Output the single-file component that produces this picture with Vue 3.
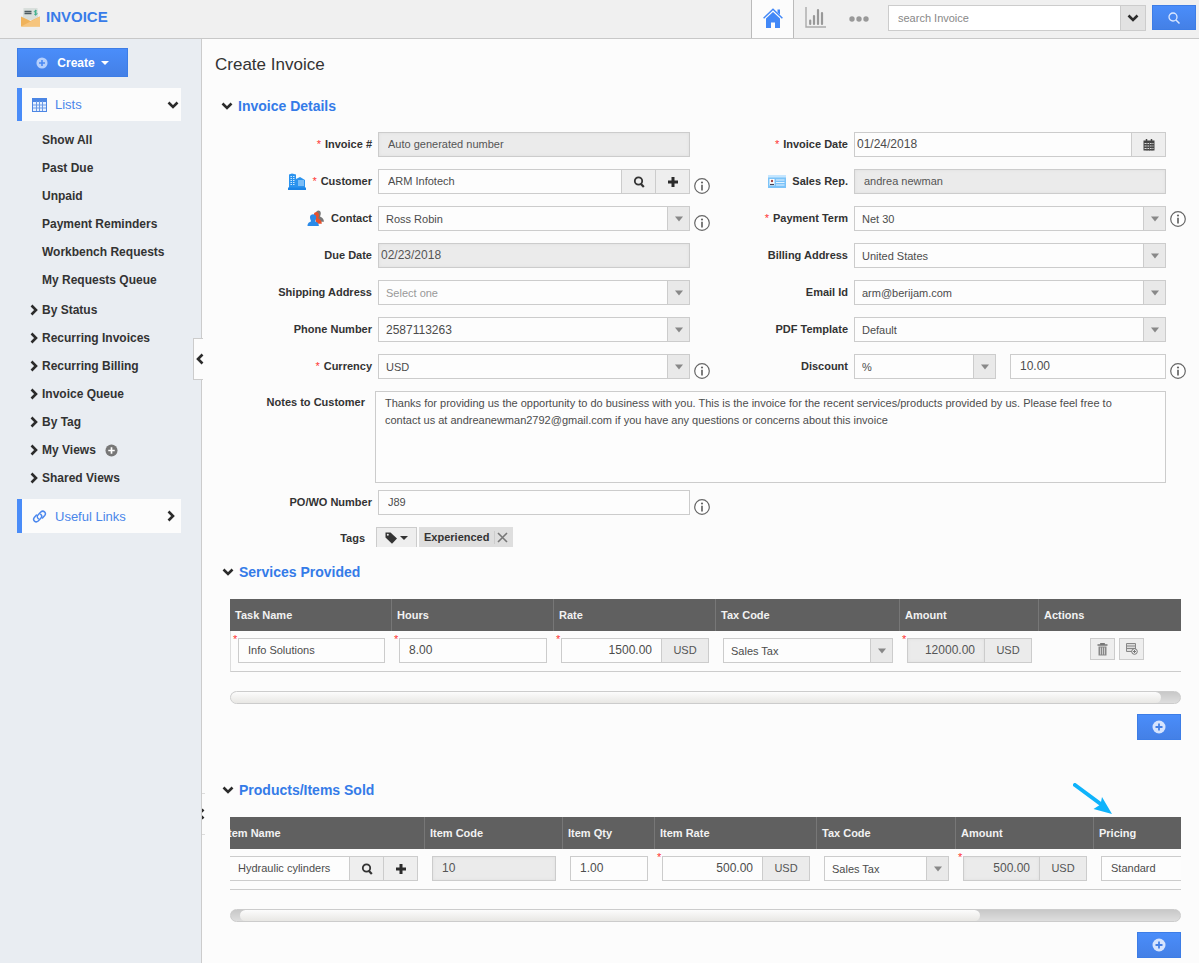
<script setup>
import { onMounted, ref } from 'vue'

const subLists = ['Show All', 'Past Due', 'Unpaid', 'Payment Reminders', 'Workbench Requests', 'My Requests Queue']
const groups = [
  { name: 'By Status' },
  { name: 'Recurring Invoices' },
  { name: 'Recurring Billing' },
  { name: 'Invoice Queue' },
  { name: 'By Tag' },
  { name: 'My Views', add: true },
  { name: 'Shared Views' },
]

const fields = [
  { id: 'number', label: 'Invoice #', required: true, type: 'text', value: 'Auto generated number', locked: true },
  { id: 'date', label: 'Invoice Date', required: true, type: 'date', value: '01/24/2018' },
  { id: 'customer', label: 'Customer', required: true, type: 'lookup', value: 'ARM Infotech', icon: 'building', info: 'low' },
  { id: 'rep', label: 'Sales Rep.', type: 'text', value: 'andrea newman', locked: true, icon: 'card' },
  { id: 'contact', label: 'Contact', type: 'select', value: 'Ross Robin', icon: 'people', info: 'low' },
  { id: 'term', label: 'Payment Term', required: true, type: 'select', value: 'Net 30', info: 'mid' },
  { id: 'due', label: 'Due Date', type: 'text', value: '02/23/2018', locked: true, tight: true, num: true },
  { id: 'billing', label: 'Billing Address', type: 'select', value: 'United States' },
  { id: 'shipping', label: 'Shipping Address', type: 'select', value: 'Select one', empty: true },
  { id: 'email', label: 'Email Id', type: 'select', value: 'arm@berijam.com' },
  { id: 'phone', label: 'Phone Number', type: 'select', value: '2587113263', num: true },
  { id: 'pdf', label: 'PDF Template', type: 'select', value: 'Default' },
  { id: 'currency', label: 'Currency', required: true, type: 'select', value: 'USD', info: 'low' },
  { id: 'discount', label: 'Discount', type: 'discount', value: '%', amount: '10.00', info: 'low' },
]

const notes = ref(
  'Thanks for providing us the opportunity to do business with you. This is the invoice for the recent services/products provided by us. Please feel free to contact us at andreanewman2792@gmail.com if you have any questions or concerns about this invoice',
)

const productScroll = ref(null)
onMounted(() => {
  productScroll.value.scrollLeft = 10
})
</script>

<template>
  <svg class="sprite" aria-hidden="true">
    <symbol id="chev" viewBox="0 0 12 12"><path d="M1.5 3.5 6 8 10.500 3.500" fill="none" stroke="#2b2b2b" stroke-width="2.600" /></symbol>
    <symbol id="plus" viewBox="0 0 12 12"><path d="M6 1v10M1 6h10" stroke="#2b2b2b" stroke-width="3" /></symbol>
    <symbol id="find" viewBox="0 0 12 12"><circle cx="5.500" cy="5" r="3.700" fill="none" stroke="#333" stroke-width="1.800" /><path d="m8 8 2.800 3" stroke="#333" stroke-width="2.200" /></symbol>
    <symbol id="tri" viewBox="0 0 8 6"><path d="M0 .5h8L4 5.500z" fill="#888" /></symbol>
    <symbol id="info" viewBox="0 0 16 16"><circle cx="8" cy="8" r="7.300" fill="#fff" stroke="#666" stroke-width="1.200" /><path d="M8 6.800v5.700" stroke="#666" stroke-width="1.700" /><circle cx="8" cy="4.500" r="1.100" fill="#666" /></symbol>
    <symbol id="pluscircle" viewBox="0 0 14 14"><circle cx="7" cy="7" r="6.500" fill="currentColor" /><path d="M7 3.500v7M3.500 7h7" stroke="var(--cross)" stroke-width="1.800" /></symbol>
    <symbol id="building" viewBox="0 0 18 17">
      <path d="M1 1.500 4 .5l4 1V15H1zM8 6l4-2 5 3v8H8z" fill="#2b93ee" />
      <path d="M0 14.500h18V17H0z" fill="#1c84e6" />
      <path d="M2.500 3.500h4M2.500 5.500h4M2.500 7.500h4M2.500 9.500h4M2.500 11.500h4M10 8h6M10 10h6M10 12h6" stroke="#c9e6ff" stroke-width="1" />
      <path d="M4.500 2v11" stroke="#2b93ee" />
    </symbol>
    <symbol id="people" viewBox="0 0 17 16">
      <path d="M8.500 2.500C9 0 12.500-.3 13 2.500c.2 2-.6 3-.6 3.500 1.500 1 3.600 2 3.600 5h-5z" fill="#777" />
      <path d="M6.500 4C7 1 11 1 11.300 4.200c.1 2-.8 3-.6 3.800 1.500 1 3.300 2 3.300 5H9z" fill="#e8502b" />
      <path d="M2.800 6.500C3 3 8.500 3 8.700 6.500c0 2-1 3.300-1 4 1.800 1 3.500 1.500 3.500 4.500H.5c0-3 1.600-3.500 3.300-4.500 0-.7-1-2-1-4z" fill="#2a8ae8" />
    </symbol>
    <symbol id="card" viewBox="0 0 18 13">
      <path d="M0 0h18v13H0z" fill="#7cc3f8" /><path d="M0 0h18v2.500H0z" fill="#c5e6ff" />
      <path d="M1.500 4h5v6.500h-5z" fill="#fff" /><circle cx="4" cy="6" r="1.200" fill="#a3423c" /><path d="M2 9.500h4" stroke="#445" stroke-width="1.200" />
      <path d="M8 5h8.500M8 7.500h8.500M8 10h8.500" stroke="#e3f3ff" stroke-width="1" />
    </symbol>
  </svg>

  <div class="page">
    <header class="topbar">
      <a class="brand" href="#">
        <svg class="brand-icon" viewBox="0 0 19 19">
          <path d="M2.500 0h14l1 12h-16z" fill="#d9dfdc" />
          <path d="M3.500 3.500h7M3.500 5.500h7" stroke="#4c5a60" stroke-width="1.400" />
          <path d="M16 3.200c-1-1-2.800-.6-2.700.5.100 1.200 2.700.6 2.700 2 0 1.200-2 1.300-2.900.3M14.600 1.800v5.800" fill="none" stroke="#3fb08c" stroke-width="1" />
          <path d="M0 8.500 9.500 13 19 8.500v10H0z" fill="#f0b35b" />
          <path d="M0 18.500 19 8.500v10z" fill="#f6c57e" />
        </svg>
        <span>INVOICE</span>
      </a>
      <nav class="tabs">
        <a class="tab active" href="#" aria-label="Home">
          <svg width="20" height="20" viewBox="0 0 20 20"><path d="M3 10.500 10 4l7 6.500V20h-5v-5.500H8V20H3z" fill="#4288f7" /><path d="m.6 10.200 9.400-9 9.400 9" fill="none" stroke="#4288f7" stroke-width="1.500" /><path d="M14.500 1.500H17v5.300l-2.500-2.300z" fill="#4288f7" /></svg>
        </a>
        <a class="tab" href="#" aria-label="Reports">
          <svg width="21" height="21" viewBox="0 0 21 21"><path d="M1 0v20h20" fill="none" stroke="#aaa" stroke-width="1.400" /><path d="M5.200 17v-3.500M9 17V9M13 17V3M17 17V6" stroke="#999" stroke-width="2.200" stroke-linecap="round" /></svg>
        </a>
        <a class="tab" href="#" aria-label="More">
          <svg width="20" height="6" viewBox="0 0 20 6"><g fill="#999"><circle cx="3" cy="3" r="2.700" /><circle cx="10" cy="3" r="2.700" /><circle cx="17" cy="3" r="2.700" /></g></svg>
        </a>
      </nav>
      <form class="search" @submit.prevent>
        <input type="text" placeholder="search Invoice" aria-label="search Invoice">
        <button class="search-menu" type="button" aria-label="Search options"><svg width="12" height="12"><use href="#chev" /></svg></button>
        <button class="blue search-go" type="submit" aria-label="Search">
          <svg width="12" height="12" viewBox="0 0 12 12"><circle cx="5" cy="5" r="4" fill="none" stroke="#dbe8ff" stroke-width="1.300" /><path d="m8 8 3.500 3.500" stroke="#dbe8ff" stroke-width="1.500" /></svg>
        </button>
      </form>
    </header>

    <div class="body">
      <aside class="sidebar">
        <button class="blue create" type="button">
          <svg class="create-plus" width="12" height="12"><use href="#pluscircle" /></svg>
          <span>Create</span>
          <svg width="8" height="4" viewBox="0 0 8 4"><path d="M0 0h8L4 4z" fill="#fff" /></svg>
        </button>
        <a class="panel" href="#">
          <svg width="15" height="14" viewBox="0 0 15 14"><path d="M0 0h15v14H0z" fill="#4c86e4" /><path d="M1 4h13v9H1z" fill="#e6f0ff" /><path d="M1 7h13M1 10h13M4.500 3v10M7.500 3v10M10.500 3v10" stroke="#6b9ae6" /></svg>
          <span>Lists</span>
          <svg class="panel-chev" width="12" height="12"><use href="#chev" /></svg>
        </a>
        <ul class="links">
          <li v-for="name in subLists" :key="name"><a href="#">{{ name }}</a></li>
        </ul>
        <ul class="links groups">
          <li v-for="g in groups" :key="g.name">
            <svg class="right" width="12" height="12"><use href="#chev" /></svg>
            <a href="#">{{ g.name }}</a>
            <svg v-if="g.add" class="add-view" width="13" height="13"><use href="#pluscircle" /></svg>
          </li>
        </ul>
        <a class="panel useful" href="#">
          <svg width="15" height="15" viewBox="0 0 15 15"><g fill="none" stroke="#4c88ee" stroke-width="1.500" stroke-linecap="round"><path d="M6.300 9.800C5 8.500 5 7 6 6l2.800-3c2.600-2.300 6 .8 3.900 3.500L10.500 9" /><path d="M8.700 5.200C10 6.500 10 8 9 9l-2.800 3c-2.600 2.300-6-.8-3.900-3.500L4.500 6" /></g></svg>
          <span>Useful Links</span>
          <svg class="panel-chev right" width="12" height="12"><use href="#chev" /></svg>
        </a>
        <button class="collapse" type="button" aria-label="Collapse sidebar"><svg class="left" width="12" height="12"><use href="#chev" /></svg></button>
        <span class="collapse-edge"><svg class="left" width="12" height="12"><use href="#chev" /></svg></span>
      </aside>

      <main class="main">
        <h1>Create Invoice</h1>

        <section>
          <h2><svg width="12" height="12"><use href="#chev" /></svg>Invoice Details</h2>
          <div class="form">
            <template v-for="f in fields" :key="f.id">
              <label class="label" :for="f.id">
                <svg v-if="f.icon" class="label-icon" width="18" height="17"><use :href="'#' + f.icon" /></svg>
                <i v-if="f.required">*</i>{{ f.label }}
              </label>

              <div v-if="f.type === 'select'" class="select">
                <select :id="f.id" :class="{ empty: f.empty, num: f.num }"><option>{{ f.value }}</option></select>
                <span class="arrow"><svg width="8" height="6"><use href="#tri" /></svg></span>
              </div>
              <div v-else-if="f.type === 'discount'" class="discount">
                <div class="select">
                  <select :id="f.id"><option>{{ f.value }}</option></select>
                  <span class="arrow"><svg width="8" height="6"><use href="#tri" /></svg></span>
                </div>
                <input class="num" type="text" :value="f.amount" aria-label="Discount amount">
              </div>
              <div v-else-if="f.type === 'lookup'" class="joined">
                <input :id="f.id" type="text" :value="f.value">
                <button type="button" aria-label="Find"><svg width="12" height="12"><use href="#find" /></svg></button>
                <button type="button" aria-label="Add"><svg width="12" height="12"><use href="#plus" /></svg></button>
              </div>
              <div v-else-if="f.type === 'date'" class="joined">
                <input :id="f.id" class="tight num" type="text" :value="f.value">
                <button type="button" aria-label="Pick date">
                  <svg width="12" height="12" viewBox="0 0 12 12"><path d="M.5 1.500h11v10H.5z" fill="#444" /><path d="M3.500 0v3M8.500 0v3" stroke="#444" stroke-width="1.500" /><path d="M1.500 4.500h9M1.500 7h9M1.500 9.500h9" stroke="#ddd" stroke-width="1.200" /><path d="M4 3.500v8M6.500 3.500v8M9 3.500v8" stroke="#555" stroke-width=".9" /></svg>
                </button>
              </div>
              <input v-else :id="f.id" type="text" :value="f.value" :readonly="f.locked" :class="{ locked: f.locked, tight: f.tight, num: f.num }">

              <span class="info" :class="f.info"><svg v-if="f.info" width="16" height="16"><use href="#info" /></svg></span>
            </template>
          </div>

          <div class="notes">
            <label for="notes">Notes to Customer</label>
            <textarea id="notes" v-model="notes"></textarea>
          </div>

          <div class="form po">
            <label class="label" for="po">PO/WO Number</label>
            <input id="po" type="text" value="J89">
            <span class="info low"><svg width="16" height="16"><use href="#info" /></svg></span>
          </div>

          <div class="tags">
            <span class="tags-label">Tags</span>
            <button class="tag-menu" type="button" aria-label="Choose tags">
              <svg width="12" height="12" viewBox="0 0 12 12"><path d="M.5.500h5L12 6.500 7 11.800.5 5.500z" fill="#333" /><circle cx="2.800" cy="2.800" r="1" fill="#eee" /></svg>
              <svg width="8" height="4" viewBox="0 0 8 4"><path d="M0 0h8L4 4z" fill="#333" /></svg>
            </button>
            <span class="tag">Experienced
              <button type="button" aria-label="Remove tag"><svg width="11" height="11" viewBox="0 0 11 11"><path d="m1 1 9 9M10 1l-9 9" stroke="#777" stroke-width="1.600" /></svg></button>
            </span>
          </div>
        </section>

        <section class="items services">
          <h2><svg width="12" height="12"><use href="#chev" /></svg>Services Provided</h2>
          <div class="scroller">
            <table class="grid services-grid">
              <colgroup><col class="w162"><col class="w162"><col class="w162"><col class="w184"><col class="w139"><col></colgroup>
              <thead>
                <tr><th>Task Name</th><th>Hours</th><th>Rate</th><th>Tax Code</th><th>Amount</th><th>Actions</th></tr>
              </thead>
              <tbody>
                <tr>
                  <td class="req"><input type="text" value="Info Solutions" aria-label="Task Name"></td>
                  <td class="req"><input class="num" type="text" value="8.00" aria-label="Hours"></td>
                  <td class="req"><div class="joined money"><input class="num" type="text" value="1500.00" aria-label="Rate"><span>USD</span></div></td>
                  <td><div class="select"><select aria-label="Tax Code"><option>Sales Tax</option></select><span class="arrow"><svg width="8" height="6"><use href="#tri" /></svg></span></div></td>
                  <td class="req"><div class="joined money"><input class="locked num" type="text" value="12000.00" readonly aria-label="Amount"><span>USD</span></div></td>
                  <td>
                    <div class="actions">
                      <button type="button" aria-label="Delete row"><svg width="11" height="13" viewBox="0 0 11 13"><path d="M.5 2h10M3.800 1.500V.7h3.400v.8" fill="none" stroke="#777" stroke-width="1.300" /><path d="M1.500 3.500h8V12.500h-8z" fill="#888" /><path d="M3.500 4.500v7M5.500 4.500v7M7.500 4.500v7" stroke="#ddd" stroke-width=".8" /></svg></button>
                      <button type="button" aria-label="Add row"><svg width="12" height="12" viewBox="0 0 12 12"><path d="M.5.500h9v8h-9z" fill="#ddd" stroke="#888" /><path d="M1 3h8M1 5.500h8" stroke="#888" /><circle cx="8.500" cy="8.500" r="2.800" fill="#f0f0f0" stroke="#777" /><path d="M8.500 7v3M7 8.500h3" stroke="#777" /></svg></button>
                    </div>
                  </td>
                </tr>
              </tbody>
            </table>
          </div>
          <div class="track"><div class="thumb thumb-services"></div></div>
          <button class="blue add" type="button" aria-label="Add service"><svg width="14" height="14"><use href="#pluscircle" /></svg></button>
        </section>

        <section class="items products">
          <h2><svg width="12" height="12"><use href="#chev" /></svg>Products/Items Sold</h2>
          <div ref="productScroll" class="scroller">
            <table class="grid products-grid">
              <colgroup><col class="w205"><col class="w138"><col class="w92"><col class="w162"><col class="w139"><col class="w138"><col></colgroup>
              <thead>
                <tr><th>Item Name</th><th>Item Code</th><th>Item Qty</th><th>Item Rate</th><th>Tax Code</th><th>Amount</th><th>Pricing</th></tr>
              </thead>
              <tbody>
                <tr>
                  <td>
                    <div class="joined">
                      <input type="text" value="Hydraulic cylinders" aria-label="Item Name">
                      <button type="button" aria-label="Find item"><svg width="12" height="12"><use href="#find" /></svg></button>
                      <button type="button" aria-label="New item"><svg width="12" height="12"><use href="#plus" /></svg></button>
                    </div>
                  </td>
                  <td><input class="locked num" type="text" value="10" readonly aria-label="Item Code"></td>
                  <td><input class="num" type="text" value="1.00" aria-label="Item Qty"></td>
                  <td class="req"><div class="joined money"><input class="num" type="text" value="500.00" aria-label="Item Rate"><span>USD</span></div></td>
                  <td><div class="select"><select aria-label="Tax Code"><option>Sales Tax</option></select><span class="arrow"><svg width="8" height="6"><use href="#tri" /></svg></span></div></td>
                  <td class="req"><div class="joined money"><input class="locked num" type="text" value="500.00" readonly aria-label="Amount"><span>USD</span></div></td>
                  <td><input type="text" value="Standard" aria-label="Pricing"></td>
                </tr>
              </tbody>
            </table>
          </div>
          <svg class="pointer" width="40" height="32" viewBox="0 0 40 32"><path d="m2 2 27 20" stroke="#0fb3fb" stroke-width="4" stroke-linecap="round" /><path d="M39 31 20.500 26l7-4.500L29 14z" fill="#0fb3fb" /></svg>
          <div class="track"><div class="thumb thumb-products"></div></div>
          <button class="blue add" type="button" aria-label="Add product"><svg width="14" height="14"><use href="#pluscircle" /></svg></button>
        </section>
      </main>
    </div>
  </div>
</template>

<style>
body {
  margin: 0;
  background: #fcfcfc;
}
</style>

<style scoped>
* {
  box-sizing: border-box;
}
.sprite {
  display: none;
}
.page {
  min-height: 100vh;
  display: flex;
  flex-direction: column;
  font: 11px "Liberation Sans", Arial, sans-serif;
  color: #333;
}
a {
  color: inherit;
  text-decoration: none;
}
svg {
  display: block;
  flex: none;
}
button,
input,
select,
textarea {
  font: inherit;
  color: #4c4c4c;
  margin: 0;
  border-radius: 0;
}
button {
  padding: 0;
  display: flex;
  align-items: center;
  justify-content: center;
}
.blue {
  background: linear-gradient(#4a8dfa, #4480e6);
  border: 1px solid #3d7de6;
  color: #fff;
}
.left {
  transform: rotate(90deg);
}
.right {
  transform: rotate(-90deg);
}

/* top bar */
.topbar {
  height: 39px;
  display: flex;
  background: #f0f0f0;
  border-bottom: 1px solid #c8c8c8;
}
.brand {
  flex: 1;
  display: flex;
  align-items: center;
  gap: 6px;
  padding: 0 0 4px 21px;
  font-size: 15px;
  font-weight: bold;
  line-height: 16px;
  color: #387ce9;
}
.brand-icon {
  width: 19px;
  height: 19px;
}
.tabs {
  display: flex;
}
.tab {
  width: 43px;
  display: flex;
  align-items: center;
  justify-content: center;
  padding-bottom: 3px;
}
.tab:last-child {
  padding-bottom: 0;
}
.tab.active {
  background: #fcfcfc;
  border: solid #bbb;
  border-width: 0 1px;
}
.search {
  display: flex;
  align-items: flex-start;
  padding: 5px 3px 0 8px;
}
.search input {
  width: 233px;
  height: 26px;
  padding: 0 9px 1px;
  border: 1px solid #ccc;
  background: #fff;
}
.search input::placeholder {
  color: #888;
}
.search-menu {
  width: 25px;
  height: 26px;
  background: #e2e2e2;
  border: 1px solid #ccc;
  border-left: 0;
}
.search-go {
  width: 44px;
  height: 25px;
  margin-left: 6px;
}

/* sidebar */
.body {
  flex: 1;
  display: flex;
}
.sidebar {
  position: relative;
  width: 202px;
  flex: none;
  padding: 9px 20px 0 17px;
  background: #e9edf2;
  border-right: 1px solid #ccc;
}
.create {
  width: 111px;
  height: 29px;
  font-size: 12px;
  font-weight: bold;
  gap: 6px;
}
.create-plus {
  margin-right: 3px;
  color: #b5cffc;
  --cross: #4888f4;
}
.panel {
  display: flex;
  align-items: center;
  gap: 8px;
  height: 33px;
  margin-top: 11px;
  padding: 0 2px 0 10px;
  border-left: 5px solid #4a8cf8;
  background: #fcfcfc;
  color: #4a86ea;
  font-size: 13px;
}
.panel-chev {
  margin-left: auto;
}
.links {
  list-style: none;
  margin: 0;
  padding: 5px 0 0;
  font-size: 12px;
  font-weight: bold;
}
.links li {
  display: flex;
  align-items: center;
  height: 28px;
  padding-left: 25px;
}
.links.groups {
  padding-top: 2px;
}
.groups li {
  padding-left: 11px;
  gap: 2px;
}
.add-view {
  margin-left: 7px;
  color: #777;
  --cross: #fff;
}
.useful {
  height: 34px;
  margin-top: 7px;
  padding-right: 4px;
}
.collapse {
  position: absolute;
  left: 193px;
  top: 299px;
  width: 10px;
  height: 42px;
  border: solid #ccc;
  border-width: 1px 0 1px 1px;
  background: #fcfcfc;
  justify-content: flex-start;
}
.collapse-edge {
  position: absolute;
  left: 202px;
  top: 754px;
  width: 3px;
  height: 42px;
  overflow: hidden;
  display: flex;
  align-items: center;
  justify-content: flex-end;
  background: #fcfcfc;
  border: solid #ddd;
  border-width: 1px 0;
}
.collapse-edge svg {
  margin-right: -2px;
}

/* main */
.main {
  flex: 1;
  min-width: 0;
  background: #fcfcfc;
}
h1 {
  margin: 0;
  padding: 16px 13px 0;
  font-size: 17px;
  font-weight: normal;
  line-height: 20px;
}
h2 {
  display: flex;
  align-items: center;
  gap: 5px;
  margin: 0;
  padding: 21px 0 0 19px;
  font-size: 14px;
  line-height: 20px;
  color: #347be8;
}
.form {
  display: grid;
  grid-template-columns: 176px 1fr 20px 144px 1fr 20px;
  row-gap: 12px;
  padding: 16px 13px 0 0;
}
.form.po {
  padding-top: 7px;
}
.label {
  display: flex;
  justify-content: flex-end;
  align-items: center;
  height: 24px;
  padding-right: 6px;
  font-weight: bold;
}
.label i {
  margin-right: 4px;
  color: #f33;
  font-style: normal;
  font-weight: normal;
}
.label-icon {
  margin-right: 6px;
}
input,
select {
  width: 100%;
  min-width: 0;
  height: 25px;
  padding: 0 9px 1px;
  border: 1px solid #ccc;
  background: #fdfdfd;
  outline: none;
}
.num {
  font-size: 12px;
}
.tight {
  padding-left: 2px;
}
.locked {
  background: #ebebeb;
  box-shadow: inset 0 0 3px #ddd;
  color: #555;
}
.select {
  display: grid;
  grid-template-columns: minmax(0, 1fr) 23px;
}
.select select {
  grid-area: 1 / 1 / 2 / 3;
  appearance: none;
  padding: 0 7px;
}
.select .empty {
  color: #999;
}
.arrow {
  grid-area: 1 / 2 / 2 / 3;
  display: flex;
  align-items: center;
  justify-content: center;
  border: 1px solid #ccc;
  background: #e9e9e9;
  pointer-events: none;
}
.joined {
  display: flex;
}
.joined input {
  flex: 1;
}
.joined button {
  width: 35px;
  height: 25px;
  margin-left: -1px;
  border: 1px solid #ccc;
  background: #eee;
}
.money input {
  text-align: right;
}
.money span {
  width: 48px;
  height: 25px;
  margin-left: -1px;
  border: 1px solid #ccc;
  background: #ebebeb;
  color: #555;
  line-height: 23px;
  text-align: center;
}
.discount {
  display: grid;
  grid-template-columns: 142fr 156fr;
  gap: 14px;
}
.info {
  display: flex;
  padding-left: 4px;
  align-items: center;
}
.info.low {
  align-items: flex-end;
}
.notes {
  display: flex;
  margin: 12px 33px 0 0;
}
.notes label {
  width: 173px;
  flex: none;
  padding: 5px 10px 0 0;
  font-weight: bold;
  text-align: right;
}
textarea {
  flex: 1;
  height: 92px;
  padding: 3px 24px 3px 9px;
  border: 1px solid #ccc;
  background: #fdfdfd;
  line-height: 17px;
  resize: none;
  outline: none;
}
.tags {
  display: flex;
  margin-top: 12px;
  height: 20px;
  font-weight: bold;
}
.tags-label {
  width: 174px;
  padding: 5px 11px 0 0;
  text-align: right;
}
.tag-menu {
  width: 41px;
  border: 1px solid #ccc;
  border-bottom: 0;
  background: #eee;
  gap: 3px;
}
.tag {
  display: flex;
  align-items: center;
  gap: 5px;
  margin-left: 2px;
  padding: 0 5px;
  background: #dedede;
}
.tag button {
  width: 14px;
  height: 13px;
  border: 0;
  border-left: 1px solid #ccc;
  background: none;
  justify-content: flex-end;
}

/* line items */
.items {
  position: relative;
}
.services h2 {
  padding: 15px 0 17px 20px;
}
.products h2 {
  padding: 40px 0 17px 20px;
}
.scroller {
  margin: 0 18px 0 28px;
  overflow: hidden;
}
.grid {
  table-layout: fixed;
  border-collapse: separate;
  border-spacing: 0;
}
.services-grid {
  width: 102%;
  min-width: 971px;
}
.products-grid {
  width: 129%;
  min-width: 1225px;
}
.w92 { width: 92px; }
.w138 { width: 138px; }
.w139 { width: 139px; }
.w162 { width: 162px; }
.w184 { width: 184px; }
.w205 { width: 205px; }
th {
  height: 32px;
  padding: 0 5px;
  border-right: 1px solid #777;
  background: #606060;
  color: #f2f2f2;
  text-align: left;
}
td {
  position: relative;
  padding: 7px 7px 8px 7px;
  border-bottom: 1px solid #ccc;
}
td:first-child {
  border-left: 1px solid #ddd;
}
.req::before {
  content: "*";
  position: absolute;
  left: 2px;
  top: 2px;
  color: #f33;
}
.actions {
  display: flex;
  gap: 4px;
  height: 25px;
  padding-left: 44px;
}
.actions button {
  width: 25px;
  height: 22px;
  border: 1px solid #ccc;
  background: #eee;
}
.track {
  height: 13px;
  margin: 19px 18px 0 28px;
  border-radius: 7px;
  border: 1px solid #ccc;
  background: linear-gradient(#c8c8c8, #dedede);
}
.thumb {
  height: 11px;
  border-radius: 6px;
  background: linear-gradient(#fcfcfc, #e8e7e4);
}
.thumb-services {
  width: 98%;
}
.thumb-products {
  width: 78%;
  margin-left: 9px;
}
.add {
  width: 44px;
  height: 26px;
  margin: 10px 18px 0 auto;
  color: #d6e4fd;
  --cross: #4480e6;
}
.pointer {
  position: absolute;
  right: 86px;
  top: 43px;
}
</style>
